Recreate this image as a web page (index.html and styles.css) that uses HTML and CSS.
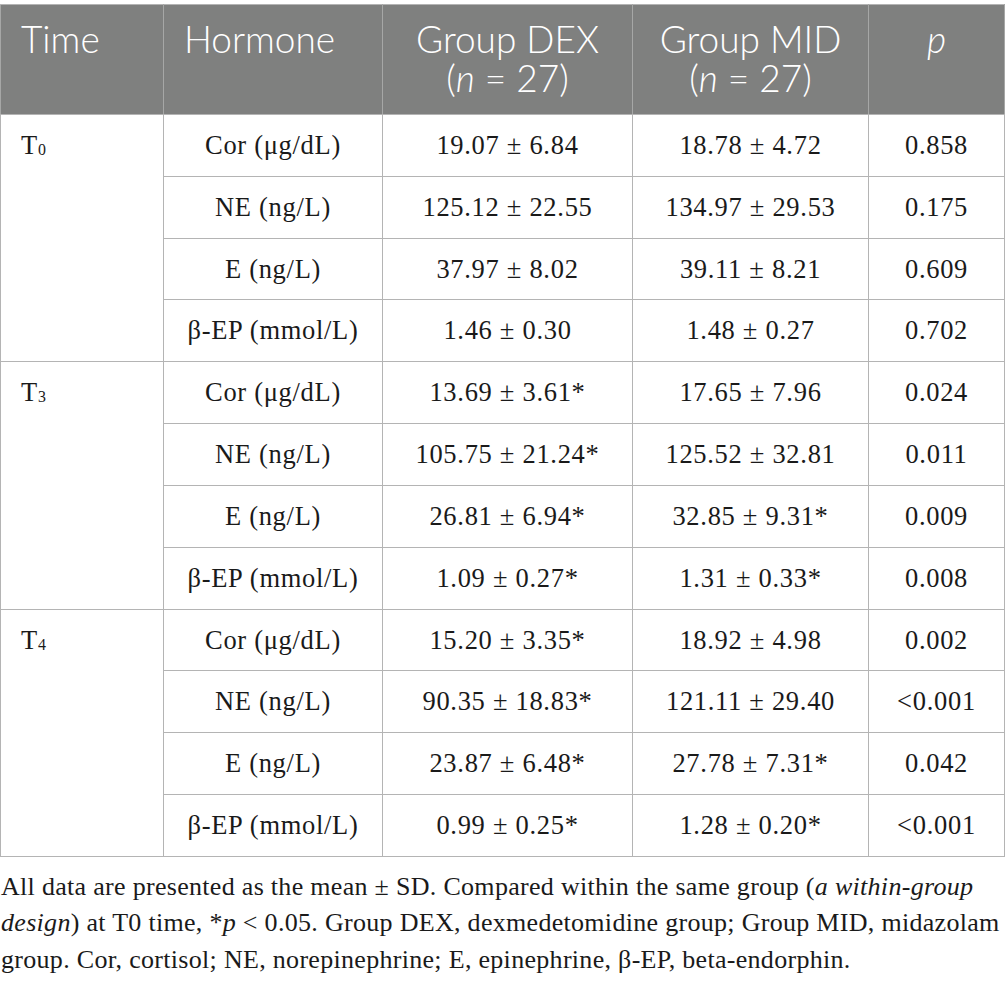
FILE: index.html
```html
<!DOCTYPE html>
<html lang="en">
<head>
<meta charset="utf-8">
<title>Table</title>
<link rel="stylesheet" href="styles.css">
</head>
<body>
<div class="wrap">
<table class="data">
  <colgroup>
    <col class="c1"><col class="c2"><col class="c3"><col class="c4"><col class="c5">
  </colgroup>
  <thead>
    <tr>
      <th class="left">Time</th>
      <th class="left">Hormone</th>
      <th>Group DEX<br>(<i>n</i> = 27)</th>
      <th>Group MID<br>(<i>n</i> = 27)</th>
      <th><i>p</i></th>
    </tr>
  </thead>
  <tbody>
    <tr><td class="time" rowspan="4">T<sub>0</sub></td><td>Cor (μg/dL)</td><td>19.07 ± 6.84</td><td>18.78 ± 4.72</td><td>0.858</td></tr>
    <tr><td>NE (ng/L)</td><td>125.12 ± 22.55</td><td>134.97 ± 29.53</td><td>0.175</td></tr>
    <tr><td>E (ng/L)</td><td>37.97 ± 8.02</td><td>39.11 ± 8.21</td><td>0.609</td></tr>
    <tr><td>β-EP (mmol/L)</td><td>1.46 ± 0.30</td><td>1.48 ± 0.27</td><td>0.702</td></tr>
    <tr><td class="time" rowspan="4">T<sub>3</sub></td><td>Cor (μg/dL)</td><td>13.69 ± 3.61*</td><td>17.65 ± 7.96</td><td>0.024</td></tr>
    <tr><td>NE (ng/L)</td><td>105.75 ± 21.24*</td><td>125.52 ± 32.81</td><td>0.011</td></tr>
    <tr><td>E (ng/L)</td><td>26.81 ± 6.94*</td><td>32.85 ± 9.31*</td><td>0.009</td></tr>
    <tr><td>β-EP (mmol/L)</td><td>1.09 ± 0.27*</td><td>1.31 ± 0.33*</td><td>0.008</td></tr>
    <tr><td class="time" rowspan="4">T<sub>4</sub></td><td>Cor (μg/dL)</td><td>15.20 ± 3.35*</td><td>18.92 ± 4.98</td><td>0.002</td></tr>
    <tr><td>NE (ng/L)</td><td>90.35 ± 18.83*</td><td>121.11 ± 29.40</td><td>&lt;0.001</td></tr>
    <tr><td>E (ng/L)</td><td>23.87 ± 6.48*</td><td>27.78 ± 7.31*</td><td>0.042</td></tr>
    <tr><td>β-EP (mmol/L)</td><td>0.99 ± 0.25*</td><td>1.28 ± 0.20*</td><td>&lt;0.001</td></tr>
  </tbody>
</table>
<p class="note">All data are presented as the mean ± SD. Compared within the same group (<i>a within-group design</i>) at T0 time, *<i>p</i> &lt; 0.05. Group DEX, dexmedetomidine group; Group MID, midazolam group. Cor, cortisol; NE, norepinephrine; E, epinephrine, β-EP, beta-endorphin.</p>
</div>
</body>
</html>
```

FILE: styles.css
```css
html, body {
  margin: 0;
  padding: 0;
  background: #ffffff;
}

.wrap {
  padding-top: 4px;
  width: 1004px;
}

.data {
  border-collapse: collapse;
  table-layout: fixed;
  width: 1004px;
  border: 1px solid #b4b4b4;
}

.c1 { width: 163px; }
.c2 { width: 219px; }
.c3 { width: 250px; }
.c4 { width: 236px; }
.c5 { width: 136px; }

.data th {
  background: #7f807f;
  color: #ffffff;
  font-family: Lato, "Open Sans", sans-serif;
  font-weight: 300;
  font-size: 37px;
  line-height: 38.5px;
  text-align: center;
  vertical-align: top;
  padding: 15px 6px 17px 6px;
  border: 1px solid #a6a7a6;
  border-top-color: #b4b4b4;
  border-bottom-color: #b4b4b4;
  white-space: nowrap;
}

.data th.left {
  text-align: left;
  padding-left: 20px;
}

.data td {
  font-family: "Liberation Serif", "Times New Roman", serif;
  font-size: 26.5px;
  letter-spacing: 0.7px;
  line-height: 30.83px;
  color: #1a1a1a;
  text-align: center;
  vertical-align: middle;
  padding: 15px 4px;
  border: 1px solid #b4b4b4;
  white-space: nowrap;
}

.data td.time {
  text-align: left;
  vertical-align: top;
  padding-left: 20px;
}

.data td.time sub {
  font-size: 0.6em;
  vertical-align: -0.05em;
  line-height: 0;
}

.note {
  margin: 12px 0 0 1px;
  font-family: "Liberation Serif", "Times New Roman", serif;
  font-size: 26px;
  letter-spacing: 0.3px;
  line-height: 36.5px;
  color: #1a1a1a;
}
```
